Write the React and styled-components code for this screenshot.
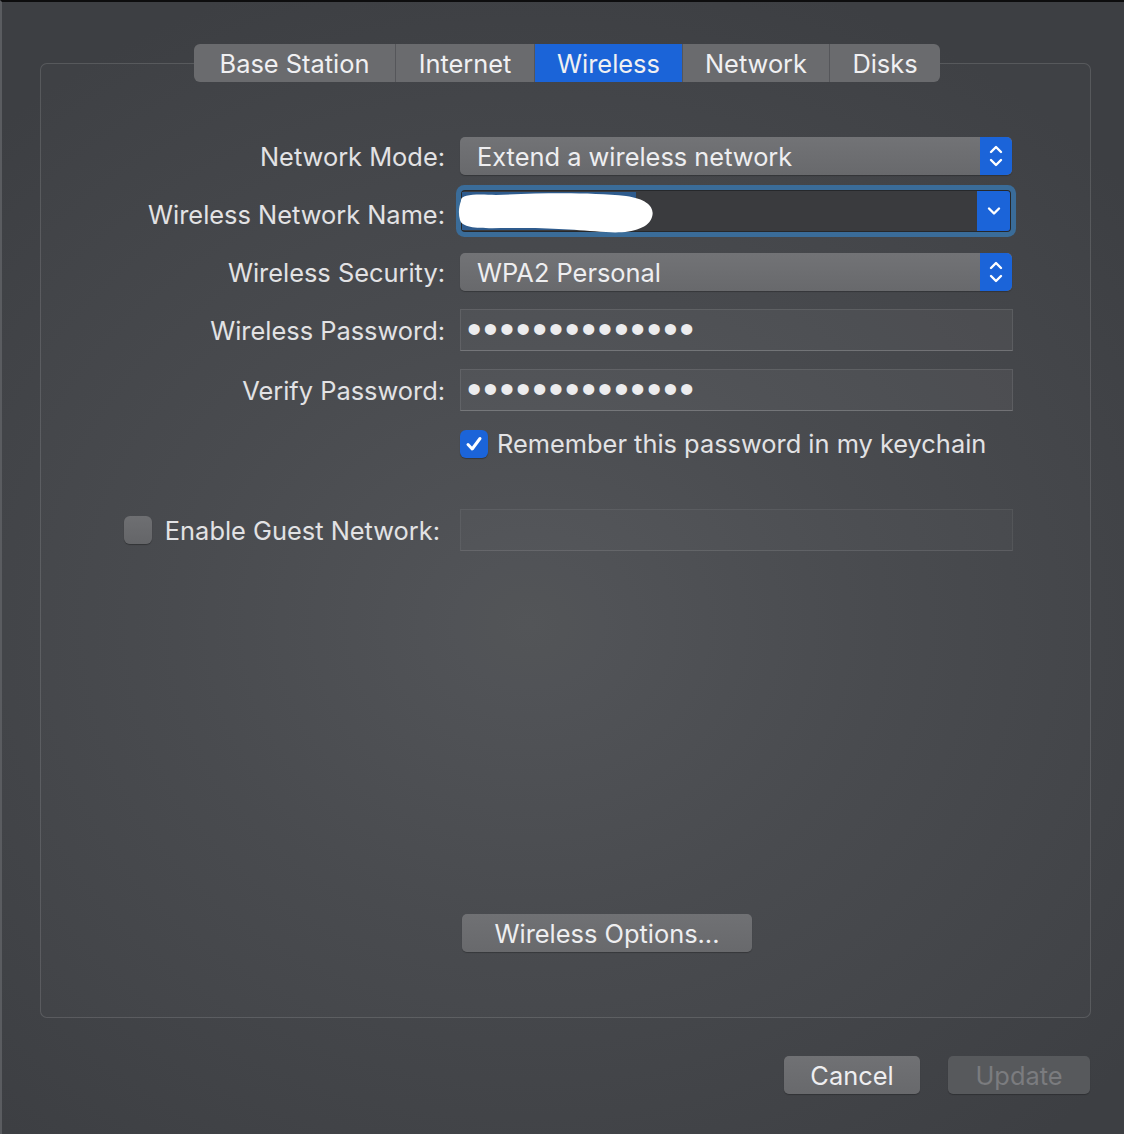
import React from "react";
import styled, { createGlobalStyle } from "styled-components";

const Global = createGlobalStyle`
  html, body { margin: 0; padding: 0; background: #3f4145; }
  body { font-family: Inter, "Noto Sans", sans-serif; -webkit-font-smoothing: antialiased; }
  * { box-sizing: border-box; }
`;

const FS = "25.4px";

const Window = styled.div`
  width: 1124px;
  height: 1134px;
  background: radial-gradient(ellipse 70% 60% at 47% 55%, #515357 0%, #47494d 45%, #3d3f43 100%);
  border-top: 2px solid #0d0d0e;
  border-left: 2px solid #5a5c60;
  padding: 42px 33px 0 38px;
  display: flex;
  flex-direction: column;
  overflow: hidden;
`;

const TabBar = styled.div`
  display: flex;
  padding-left: 154px;
  height: 38px;
  position: relative;
  z-index: 1;
`;

const Tab = styled.div`
  width: ${p => p.$w}px;
  height: 38px;
  display: flex;
  align-items: center;
  justify-content: center;
  font-size: ${FS};
  color: #f0f0f2;
  background: ${p => (p.$active ? "#1b64d8" : "#6a6b6e")};
  & + & { border-left: 1px solid ${p => (p.$active ? "#1b64d8" : "#55565a")}; }
  &:first-child { border-radius: 6px 0 0 6px; }
  &:last-child { border-radius: 0 6px 6px 0; }
`;

const GroupBox = styled.div`
  margin-top: -19px;
  height: 955px;
  border: 1px solid rgba(255, 255, 255, 0.13);
  border-radius: 7px;
  background: rgba(255, 255, 255, 0.012);
  padding: 73px 0 65px 0;
  display: flex;
  flex-direction: column;
`;

const Row = styled.div`
  display: grid;
  grid-template-columns: 404px 553px;
  column-gap: 15px;
  align-items: center;
  margin-top: ${p => p.$mt || 0}px;
  height: ${p => p.$h}px;
`;

const Label = styled.div`
  font-size: ${FS};
  color: #e2e2e4;
  text-align: right;
  white-space: nowrap;
  padding-right: ${p => p.$pr || 0}px;
  transform: translateY(${p => p.$dy || 0}px);
`;

const CheckLabel = styled.label`
  display: flex;
  align-items: center;
  justify-content: ${p => (p.$end ? "flex-end" : "flex-start")};
  gap: ${p => p.$gap}px;
  font-size: ${FS};
  color: #e2e2e4;
  white-space: nowrap;
  padding-right: ${p => p.$pr || 0}px;
`;

const Popup = styled.div`
  width: 552px;
  height: 38px;
  border-radius: 5px;
  background: linear-gradient(#727376, #68696c);
  box-shadow: 0 1px 1px rgba(0, 0, 0, 0.25);
  display: flex;
  align-items: center;
  font-size: ${FS};
  color: #eeeef0;
  overflow: hidden;
`;

const PopupText = styled.span`
  flex: 1;
  padding-left: 17px;
`;

const BlueCap = styled.span`
  width: ${p => p.$w}px;
  align-self: stretch;
  background: #1b64d9;
  display: flex;
  align-items: center;
  justify-content: center;
  border-radius: ${p => p.$r};
`;

const Combo = styled.div`
  position: relative;
  width: 548px;
  height: 40px;
  margin-left: 2px;
  border-radius: 3px;
  background: #3a3b3e;
  box-shadow: 0 0 0 1px #26282b, 0 0 0 6px #3a6c99;
  display: flex;
`;

const Selection = styled.span`
  width: 174px;
  margin: 1px 0;
  background: #2e5b8d;
`;

const Spacer = styled.span`
  flex: 1;
`;

const Redaction = styled.svg`
  position: absolute;
  left: -8px;
  top: -2px;
  width: 200px;
  height: 46px;
`;

const Field = styled.div`
  width: 553px;
  height: 42px;
  background: ${p => (p.$disabled ? "rgba(255,255,255,0.018)" : "rgba(255,255,255,0.045)")};
  border: 1px solid ${p => (p.$disabled ? "rgba(255,255,255,0.06)" : "rgba(255,255,255,0.09)")};
  border-bottom-color: ${p => (p.$disabled ? "rgba(255,255,255,0.1)" : "rgba(255,255,255,0.2)")};
  display: flex;
  align-items: center;
  padding-left: 6px;
`;

const Dots = styled.span`
  font-family: "Liberation Sans", Arial, sans-serif;
  font-size: 41px;
  letter-spacing: 2px;
  color: #ececee;
  line-height: 1;
  transform: translateY(-1px);
`;

const Box = styled.span`
  width: 28px;
  height: 28px;
  border-radius: 6px;
  flex: none;
  display: flex;
  align-items: center;
  justify-content: center;
  background: ${p => (p.$checked ? "#1b64d9" : "linear-gradient(#6e6f72, #646568)")};
  box-shadow: 0 1px 1px rgba(0, 0, 0, 0.3);
`;

const PushButton = styled.button`
  width: ${p => p.$w}px;
  height: 38px;
  margin-left: ${p => p.$ml || 0}px;
  border: none;
  border-radius: 5px;
  font-family: inherit;
  font-size: ${FS};
  padding: 0;
  color: ${p => (p.$disabled ? "#7b7c7f" : "#eeeef0")};
  background: ${p => (p.$disabled ? "#57595c" : "linear-gradient(#707174, #68696c)")};
  box-shadow: 0 1px 1px rgba(0, 0, 0, 0.25);
`;

const Bottom = styled.div`
  margin-top: auto;
`;

const Footer = styled.div`
  display: flex;
  justify-content: flex-end;
  gap: 28px;
  margin-top: 38px;
  padding-right: 1px;
`;

const Stepper = () => (
  <svg width="16" height="28" viewBox="0 0 16 28" fill="none" stroke="#fff" strokeWidth="2.4" strokeLinecap="round" strokeLinejoin="round">
    <path d="M3 10 L8 5 L13 10" />
    <path d="M3 18 L8 23 L13 18" />
  </svg>
);

const ChevronDown = () => (
  <svg width="16" height="12" viewBox="0 0 16 12" fill="none" stroke="#fff" strokeWidth="2.4" strokeLinecap="round" strokeLinejoin="round">
    <path d="M3 3.5 L8 8.5 L13 3.5" />
  </svg>
);

const Check = () => (
  <svg width="20" height="20" viewBox="0 0 20 20" fill="none" stroke="#fff" strokeWidth="3" strokeLinecap="round" strokeLinejoin="round">
    <path d="M4 10.5 L8.2 15 L16 4.5" />
  </svg>
);

const tabs = [
  { name: "Base Station", w: 201 },
  { name: "Internet", w: 139 },
  { name: "Wireless", w: 148, active: true },
  { name: "Network", w: 147 },
  { name: "Disks", w: 111 },
];

export default function App() {
  return (
    <>
      <Global />
      <Window>
        <TabBar>
          {tabs.map(t => (
            <Tab key={t.name} $w={t.w} $active={t.active}>{t.name}</Tab>
          ))}
        </TabBar>
        <GroupBox>
          <Row $h={38}>
            <Label>Network Mode:</Label>
            <Popup>
              <PopupText>Extend a wireless network</PopupText>
              <BlueCap $w={32} $r="0 5px 5px 0"><Stepper /></BlueCap>
            </Popup>
          </Row>
          <Row $h={40} $mt={16}>
            <Label $dy={3}>Wireless Network Name:</Label>
            <Combo>
              <Selection />
              <Spacer />
              <BlueCap $w={33} $r="0 3px 3px 0"><ChevronDown /></BlueCap>
              <Redaction viewBox="0 0 200 46">
                <path
                  d="M7 12 C 6 5, 22 5, 42 6 C 84 4, 134 3, 172 7 C 194 10, 201 19, 198 28 C 195 40, 174 45, 152 43 C 122 41, 100 39, 62 39 C 32 39, 9 41, 6 31 C 4 24, 5 17, 7 12 Z"
                  fill="#ffffff"
                />
              </Redaction>
            </Combo>
          </Row>
          <Row $h={38} $mt={22}>
            <Label>Wireless Security:</Label>
            <Popup>
              <PopupText>WPA2 Personal</PopupText>
              <BlueCap $w={32} $r="0 5px 5px 0"><Stepper /></BlueCap>
            </Popup>
          </Row>
          <Row $h={42} $mt={18}>
            <Label>Wireless Password:</Label>
            <Field><Dots>••••••••••••••</Dots></Field>
          </Row>
          <Row $h={42} $mt={18}>
            <Label>Verify Password:</Label>
            <Field><Dots>••••••••••••••</Dots></Field>
          </Row>
          <Row $h={28} $mt={17}>
            <span />
            <CheckLabel $gap={9}>
              <Box $checked><Check /></Box>
              Remember this password in my keychain
            </CheckLabel>
          </Row>
          <Row $h={42} $mt={53}>
            <CheckLabel $end $gap={13} $pr={5}>
              <Box />
              Enable Guest Network:
            </CheckLabel>
            <Field $disabled />
          </Row>
          <Bottom>
            <Row $h={38}>
              <span />
              <PushButton $w={290} $ml={2}>Wireless Options...</PushButton>
            </Row>
          </Bottom>
        </GroupBox>
        <Footer>
          <PushButton $w={136}>Cancel</PushButton>
          <PushButton $w={142} $disabled>Update</PushButton>
        </Footer>
      </Window>
    </>
  );
}
